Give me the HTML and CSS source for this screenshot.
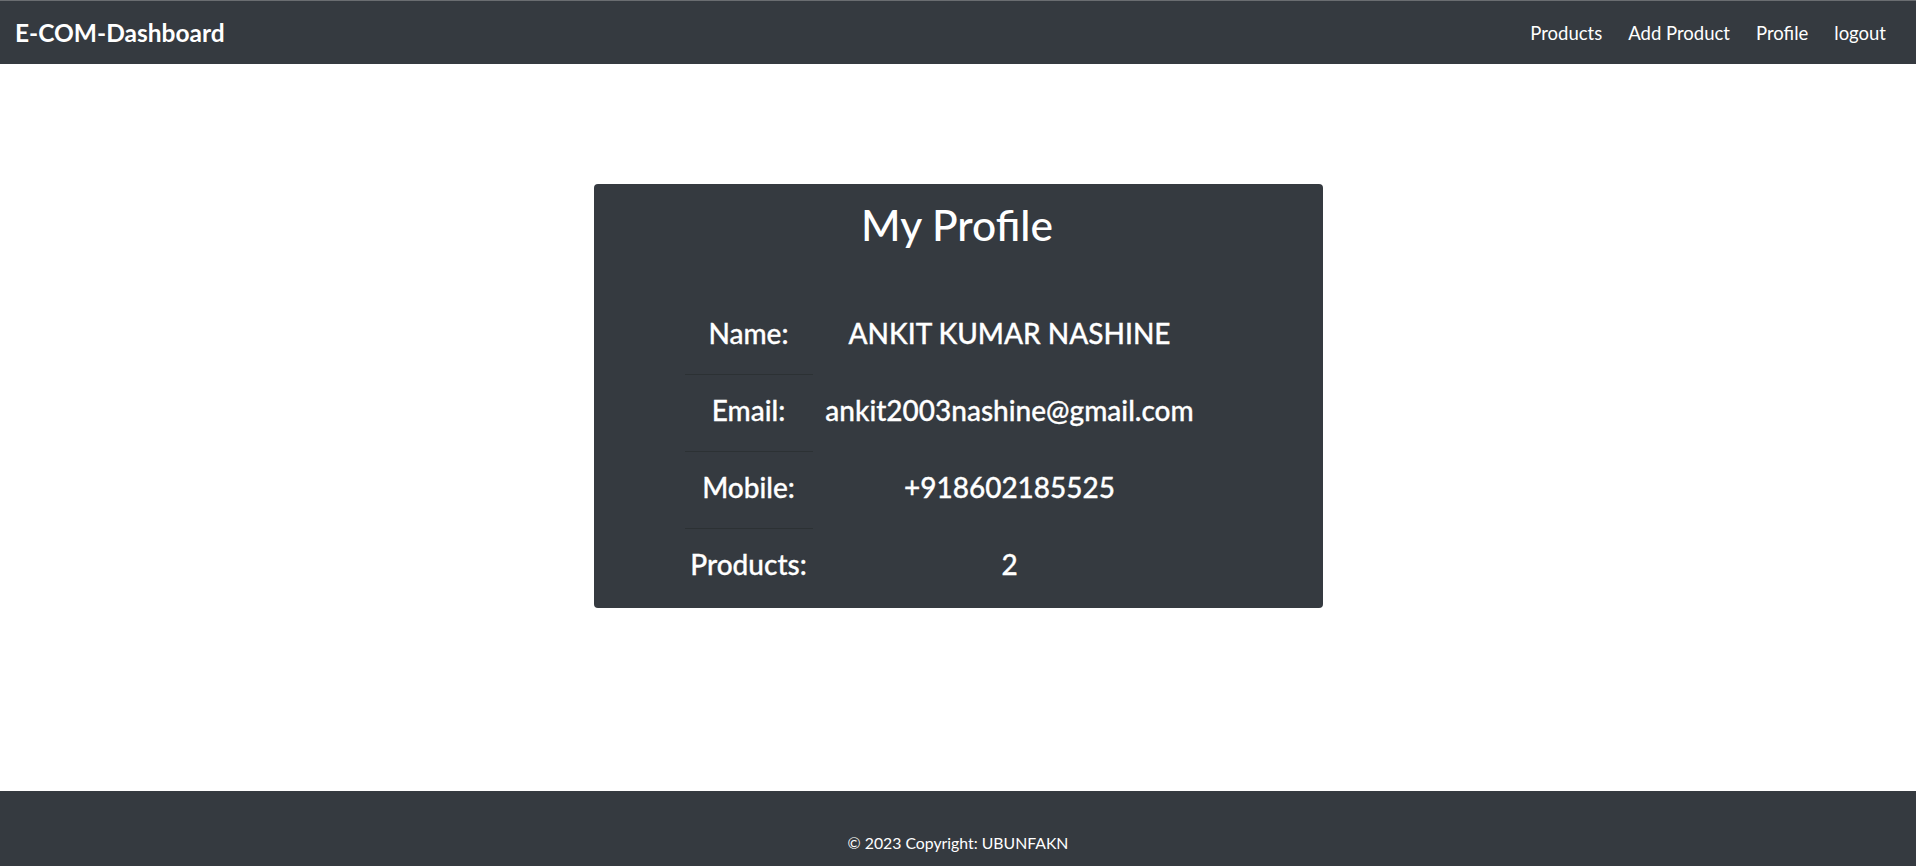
FILE: index.html
```html
<!DOCTYPE html>
<html lang="en">
<head>
<meta charset="utf-8">
<title>E-COM-Dashboard</title>
<link rel="stylesheet" href="styles.css">
</head>
<body>
<div class="page">
  <nav class="navbar">
    <a class="brand" href="#">E-COM-Dashboard</a>
    <ul class="nav-links">
      <li><a href="#">Products</a></li>
      <li><a href="#">Add Product</a></li>
      <li><a href="#">Profile</a></li>
      <li><a href="#">logout</a></li>
    </ul>
  </nav>
  <main class="main">
    <section class="card">
      <h1 class="card-title">My Profile</h1>
      <div class="profile-table">
        <div class="label">Name:</div><div class="value">ANKIT KUMAR NASHINE</div>
        <div class="label">Email:</div><div class="value">ankit2003nashine@gmail.com</div>
        <div class="label">Mobile:</div><div class="value">+918602185525</div>
        <div class="label last">Products:</div><div class="value">2</div>
      </div>
    </section>
  </main>
  <footer class="footer">
    <p>© 2023 Copyright: UBUNFAKN</p>
  </footer>
</div>
</body>
</html>
```

FILE: styles.css
```css
* { box-sizing: border-box; }
html, body { margin: 0; padding: 0; }
body {
  font-family: Lato, "Open Sans", "Liberation Sans", sans-serif;
  color: #fff;
  background: #fff;
}
.page {
  display: flex;
  flex-direction: column;
  min-height: 100vh;
}
.navbar {
  height: 64px;
  background: #353a40;
  border-top: 1px solid #6a6d71;
  display: flex;
  align-items: center;
  justify-content: space-between;
  padding: 0 30px 0 15px;
}
.brand {
  color: #fff;
  text-decoration: none;
  font-weight: 700;
  font-size: 24.5px;
  margin-bottom: 1px;
}
.nav-links {
  list-style: none;
  margin: 0;
  padding: 0;
  display: flex;
  gap: 26px;
}
.nav-links a {
  color: #fff;
  text-decoration: none;
  font-size: 18.5px;
}
.main {
  flex: 1;
  display: flex;
  justify-content: center;
  align-items: flex-start;
  padding-top: 120px;
}
.card {
  width: 729px;
  height: 424px;
  background: #353a40;
  border-radius: 4px;
  display: flex;
  flex-direction: column;
  align-items: center;
  padding-top: 8px;
}
.card-title {
  margin: 0;
  font-size: 42.5px;
  font-weight: 500;
  line-height: 66px;
  height: 106px;
  padding-right: 2px;
}
.profile-table {
  display: grid;
  grid-template-columns: 128px 394px;
  grid-auto-rows: 77px;
  margin-right: 25px;
  font-size: 28px;
  font-weight: 500;
  text-align: center;
  -webkit-text-stroke: 0.3px #fff;
}
.label, .value {
  display: flex;
  align-items: center;
  justify-content: center;
  padding-bottom: 7px;
}
.label {
  border-bottom: 1px solid #2c3134;
}
.label.last { border-bottom: none; }
.footer {
  height: 75px;
  background: #353a40;
  display: flex;
  justify-content: center;
  padding-top: 42px;
}
.footer p {
  margin: 0;
  font-size: 15.8px;
  line-height: 20px;
}
```
